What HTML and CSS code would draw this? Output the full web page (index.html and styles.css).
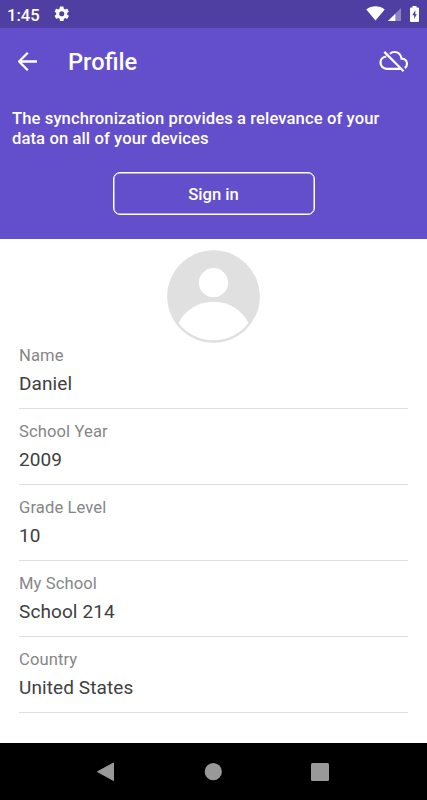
FILE: index.html
```html
<!DOCTYPE html>
<html lang="en">
<head>
    <meta charset="UTF-8">
    <title>Profile</title>
    <link rel="stylesheet" href="styles.css">
</head>
<body>
    <!-- Status bar -->
    <div class="status-bar">
        <span class="time">1:45</span>
        <svg class="gear" viewBox="0 0 24 24"><path fill="#fff" d="M19.4 13c0-.3.1-.6.1-1s0-.7-.1-1l2.1-1.6c.2-.2.2-.4.1-.6l-2-3.5c-.1-.2-.4-.3-.6-.2l-2.5 1c-.5-.4-1.1-.7-1.7-1l-.4-2.6c0-.3-.2-.5-.5-.5h-4c-.3 0-.5.2-.5.5l-.4 2.6c-.6.3-1.2.6-1.7 1l-2.5-1c-.2-.1-.5 0-.6.2l-2 3.5c-.1.2-.1.4.1.6L4.5 11c0 .3-.1.6-.1 1s0 .7.1 1l-2.1 1.6c-.2.2-.2.4-.1.6l2 3.5c.1.2.4.3.6.2l2.5-1c.5.4 1.1.7 1.7 1l.4 2.6c0 .3.2.5.5.5h4c.3 0 .5-.2.5-.5l.4-2.6c.6-.3 1.2-.6 1.7-1l2.5 1c.2.1.5 0 .6-.2l2-3.5c.1-.2.1-.4-.1-.6zM12 15.5a3.5 3.5 0 1 1 0-7 3.5 3.5 0 0 1 0 7z"/></svg>
        <div class="status-icons">
            <svg width="19" height="15" viewBox="0 0 19 15"><path fill="#fff" d="M9.5 14.5.3 3.5C5.5-.7 13.5-.7 18.7 3.5z"/></svg>
            <svg class="signal" width="13" height="13" viewBox="0 0 13 13"><path fill="#fff" fill-opacity=".35" d="M13 0v13H0z"/><path fill="#fff" d="M7.3 5.7V13H0z"/></svg>
            <svg class="battery" width="9" height="16" viewBox="0 0 9 16"><path fill="#fff" d="M2.5 0h4v1.500H8q1 0 1 1V15q0 1-1 1H1q-1 0-1-1V2.500q0-1 1-1h1.500z"/><path fill="#503fa3" d="M5.300 4 2.300 9.300h1.900V13l2.600-4.700H5.300z"/></svg>
        </div>
    </div>

    <!-- Toolbar and sign in -->
    <div class="header">
        <div class="toolbar">
            <svg class="back" width="20" height="20" viewBox="0 0 20 20"><path d="M19 9.500H1.500M9.800.8 1.100 9.500l8.700 8.700" fill="none" stroke="#fff" stroke-width="2.300"/></svg>
            <h1>Profile</h1>
            <svg class="cloud-off" width="30" height="24" viewBox="0 0 30 24"><path d="M7.300 6.500C3.800 6.900 1.500 9.600 1.500 12.600c0 3.500 2.700 6.200 6.200 6.200h14M10.900 3.700C12.200 2.500 13.700 2 15.500 2c3.700 0 6.500 2.700 7.100 6.600 3.200.1 5.400 2.300 5.400 5.200 0 1.900-.8 3.300-2.300 4.200M5.300 1.900l19.300 19.300" fill="none" stroke="#fff" stroke-width="2.200"/></svg>
        </div>
        <p class="sync-text">The synchronization provides a relevance of your data on all of your devices</p>
        <button class="sign-in">Sign in</button>
    </div>

    <!-- Profile fields -->
    <div class="profile">
        <svg class="avatar" width="93" height="93" viewBox="0 0 93 93">
            <circle cx="46.5" cy="46.5" r="46.3" fill="#e0e0e0"/>
            <circle cx="46.5" cy="32.7" r="14.6" fill="#fff"/>
            <path d="M11.5 73C18 60 31 51.8 46.5 51.8S75 60 81.5 73A44 44 0 0 1 11.5 73z" fill="#fff"/>
        </svg>
        <div class="field">
            <div class="label">Name</div>
            <div class="value">Daniel</div>
        </div>
        <div class="field">
            <div class="label">School Year</div>
            <div class="value">2009</div>
        </div>
        <div class="field">
            <div class="label">Grade Level</div>
            <div class="value">10</div>
        </div>
        <div class="field">
            <div class="label">My School</div>
            <div class="value">School 214</div>
        </div>
        <div class="field">
            <div class="label">Country</div>
            <div class="value">United States</div>
        </div>
    </div>

    <!-- Android navigation -->
    <div class="nav-bar">
        <svg width="18" height="20" viewBox="0 0 18 20"><path fill="#999" stroke="#999" stroke-linejoin="round" d="M16.500 1v17.500L.500 9.700z"/></svg>
        <svg width="18" height="18" viewBox="0 0 18 18"><circle cx="9.300" cy="8.700" r="8.600" fill="#999"/></svg>
        <svg width="18" height="18" viewBox="0 0 18 18"><rect width="18" height="18" rx="1.500" fill="#999"/></svg>
    </div>
</body>
</html>
```

FILE: styles.css
```css
body {
    margin: 0;
    height: 800px;
    display: flex;
    flex-direction: column;
    overflow: hidden;
    font-family: Roboto, sans-serif;
    background: #fff;
}

svg {
    display: block;
    flex: none;
}

/* Status bar */
.status-bar {
    display: flex;
    align-items: center;
    height: 28px;
    padding: 0 8px 0 7px;
    box-sizing: border-box;
    background: #503fa3;
    color: #fff;
}

.time {
    width: 46px;
    padding-top: 3px;
    font-size: 16.6px;
    font-weight: 500;
    line-height: 26px;
}

.gear {
    width: 17.5px;
    height: 17.5px;
}

.status-icons {
    display: flex;
    margin-left: auto;
}

.signal {
    margin: 2px 9px 0 3px;
}

/* Header */
.header {
    height: 210.5px;
    background: #634ecb;
    color: #fff;
}

.toolbar {
    display: flex;
    align-items: center;
    height: 67px;
    padding: 0 18px;
}

.toolbar h1 {
    margin: 0 0 0 30px;
    font-size: 23.7px;
    font-weight: 500;
}

.cloud-off {
    margin-left: auto;
}

.sync-text {
    width: 385px;
    margin: 14px 12px 24px;
    font-size: 16.6px;
    font-weight: 500;
    line-height: 19.5px;
    letter-spacing: 0.1px;
}

.sign-in {
    display: block;
    width: 202px;
    height: 43px;
    margin: 0 auto;
    padding: 2px 0 0;
    border: 1px solid #fff;
    border-radius: 7px;
    box-shadow: inset 0 0 0 0.5px #fff;
    background: none;
    color: #fff;
    font-family: inherit;
    font-size: 16.6px;
    font-weight: 500;
}

/* Profile */
.profile {
    flex: 1;
    padding: 11.5px 19px 0;
}

.avatar {
    margin: 0 auto;
}

.field {
    height: 76px;
    box-sizing: border-box;
    padding-top: 12.5px;
    border-bottom: 1px solid #dedede;
}

.avatar + .field {
    height: 66px;
    padding-top: 2.5px;
}

.label {
    font-size: 16.6px;
    line-height: 20px;
    letter-spacing: 0.1px;
    color: #868686;
}

.value {
    margin-top: 6.5px;
    font-size: 19px;
    line-height: 23px;
    letter-spacing: 0.1px;
    color: #404040;
}

/* Navigation */
.nav-bar {
    display: flex;
    align-items: center;
    justify-content: space-between;
    height: 57px;
    padding: 0 98px 0 97px;
    box-sizing: border-box;
    background: #000;
}
```
